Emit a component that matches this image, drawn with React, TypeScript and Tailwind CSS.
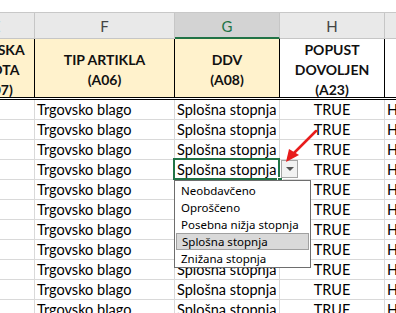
import React from "react";

const rows = Array.from({ length: 11 }, (_, i) => i);

const listItems = [
  "Neobdavčeno",
  "Oproščeno",
  "Posebna nižja stopnja",
  "Splošna stopnja",
  "Znižana stopnja",
];

export default function App() {
  return (
    <div
      className="relative w-[396px] h-[313px] overflow-hidden bg-white text-black"
      style={{ fontFamily: "Lato, 'Liberation Sans', sans-serif" }}
    >
      <div className="h-[13px] bg-white border-b border-[#c8c8c8]" />
      <div className="ml-[-42px] w-[500px]">
        {/* column letters */}
        <div className="flex h-[26px] bg-[#e9e9e9] text-[15px] text-[#444]">
          <div className="w-[77px] border-r border-[#c6c6c6] flex items-end justify-center pb-[1px] border-b border-b-[#c6c6c6]">E</div>
          <div className="w-[140px] border-r border-[#c6c6c6] flex items-end justify-center pb-[1px] border-b border-b-[#c6c6c6]">F</div>
          <div className="w-[105px] border-r border-[#c6c6c6] flex items-end justify-center pb-[0px] bg-[#d3d3d3] text-[#217346] border-b-2 border-b-[#217346]">G</div>
          <div className="w-[105px] border-r border-[#c6c6c6] flex items-end justify-center pb-[1px] border-b border-b-[#c6c6c6]">H</div>
          <div className="w-[60px] border-b border-b-[#c6c6c6]" />
        </div>
        {/* header row */}
        <div className="flex h-[61px] border-b-[3px] border-double border-b-black font-bold text-[14px] leading-[20px] text-[#111]">
          <div className="w-[77px] bg-[#fff2cc] border-r border-black flex flex-col items-center justify-center pt-[3px]">
            <span>MERSKA</span>
            <span>ENOTA</span>
            <span>(A07)</span>
          </div>
          <div className="w-[140px] bg-[#fff2cc] border-r border-black flex flex-col items-center justify-center pt-[3px]">
            <span>TIP ARTIKLA</span>
            <span>(A06)</span>
          </div>
          <div className="w-[105px] bg-[#fff2cc] border-r border-black flex flex-col items-center justify-center pt-[3px]">
            <span>DDV</span>
            <span>(A08)</span>
          </div>
          <div className="w-[105px] bg-white border-r border-black flex flex-col items-center justify-center pt-[3px]">
            <span>POPUST</span>
            <span>DOVOLJEN</span>
            <span>(A23)</span>
          </div>
          <div className="w-[60px] bg-white" />
        </div>
        {/* data rows */}
        {rows.map((i) => (
          <div key={i} className="flex h-[20px] border-b border-[#d9d9d9] text-[14.5px] leading-[20px]">
            <div className="w-[77px] border-r border-[#d9d9d9]" />
            <div className="w-[140px] border-r border-[#d9d9d9] pl-[2px] whitespace-nowrap">Trgovsko blago</div>
            <div className="relative w-[105px] border-r border-[#d9d9d9] pl-[2px] whitespace-nowrap">
              Splošna stopnja
              {i === 3 && (
                <>
                  <div className="absolute left-[-2px] top-[-2px] right-[-1px] bottom-[-1px] border-2 border-[#217346] z-10" />
                  <div className="absolute right-[-4px] bottom-[-4px] w-[6px] h-[6px] bg-[#217346] border border-white z-10" />
                  <div className="absolute left-[106px] top-[0px] w-[17px] h-[18px] border border-[#a6a6a6] bg-[#f2f2f2] flex items-center justify-center z-10">
                    <div className="w-0 h-0 border-l-[4px] border-r-[4px] border-t-[4px] border-l-transparent border-r-transparent border-t-[#555]" />
                  </div>
                  <div
                    className="absolute left-[-1px] top-[20px] w-[137px] h-[88px] bg-white border border-[#6e6e6e] p-[1px] z-20 text-[11.5px] leading-[17px]"
                    style={{ fontFamily: "'Noto Sans', 'DejaVu Sans', sans-serif" }}
                  >
                    {listItems.map((t) => (
                      <div
                        key={t}
                        className={
                          "h-[17px] pl-[5px] whitespace-nowrap " +
                          (t === "Splošna stopnja" ? "bg-[#d9d9d9] border border-[#a0a0a0] pl-[4px] leading-[15px]" : "")
                        }
                      >
                        {t}
                      </div>
                    ))}
                  </div>
                </>
              )}
            </div>
            <div className="w-[105px] border-r border-[#d9d9d9] text-center">TRUE</div>
            <div className="w-[60px] pl-[2px]">H</div>
          </div>
        ))}
      </div>
      <svg className="absolute left-0 top-0 pointer-events-none z-30" width="396" height="313">
        <line x1="316" y1="131" x2="293" y2="154" stroke="#e81c1c" strokeWidth="2.5" strokeLinecap="round" />
        <polygon points="286,162 289,149 299,155" fill="#e81c1c" />
      </svg>
    </div>
  );
}
